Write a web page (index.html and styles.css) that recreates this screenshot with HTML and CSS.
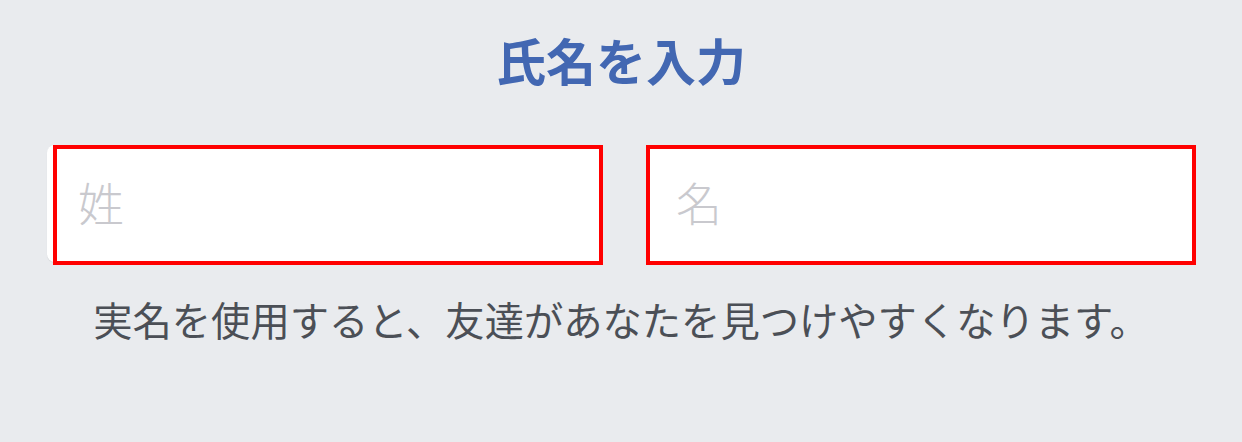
FILE: index.html
```html
<!DOCTYPE html>
<html lang="ja">
<head>
<meta charset="utf-8">
<title>氏名を入力</title>
<link rel="stylesheet" href="styles.css">
</head>
<body>
<main class="page">
  <h1 class="title">氏名を入力</h1>
  <div class="row">
    <div class="field first"><span class="placeholder">姓</span></div>
    <div class="field second"><span class="placeholder">名</span></div>
  </div>
  <p class="hint">実名を使用すると、友達があなたを見つけやすくなります。</p>
</main>
</body>
</html>
```
FILE: styles.css
```css
html {
  background: #e9ebee;
}
html, body {
  margin: 0;
  padding: 0;
}
body {
  font-family: "Noto Sans CJK JP", "Noto Sans", sans-serif;
  width: 1242px;
  height: 442px;
  overflow: hidden;
}
.page {
  display: flex;
  flex-direction: column;
}
.title {
  margin: 34px 0 0;
  font-size: 50px;
  line-height: 50px;
  font-weight: 700;
  color: #4267b2;
  text-align: center;
}
.row {
  display: flex;
  gap: 43px;
  padding: 0 46px 0 53px;
  margin-top: 61px;
}
.field {
  flex: none;
  width: 550px;
  height: 120px;
  box-sizing: border-box;
  border: 4px solid #ff0000;
  background: #fff;
  position: relative;
  display: flex;
  align-items: center;
  padding-left: 21px;
}
.field.second {
  padding-left: 26px;
}
.field.first::before {
  content: "";
  position: absolute;
  left: -10px;
  top: -4px;
  right: 1px;
  bottom: -1px;
  background: #fff;
  border-radius: 8px;
  box-shadow: 0 1px 1px rgba(0,0,0,0.08);
  z-index: -1;
}
.placeholder {
  font-size: 46px;
  line-height: 46px;
  font-weight: 300;
  color: #c9c9ce;
  margin-top: -8px;
}
.hint {
  margin: 34px 0 0;
  font-size: 39.3px;
  line-height: 40px;
  font-weight: 400;
  color: #4b4f56;
  text-align: center;
}
```
